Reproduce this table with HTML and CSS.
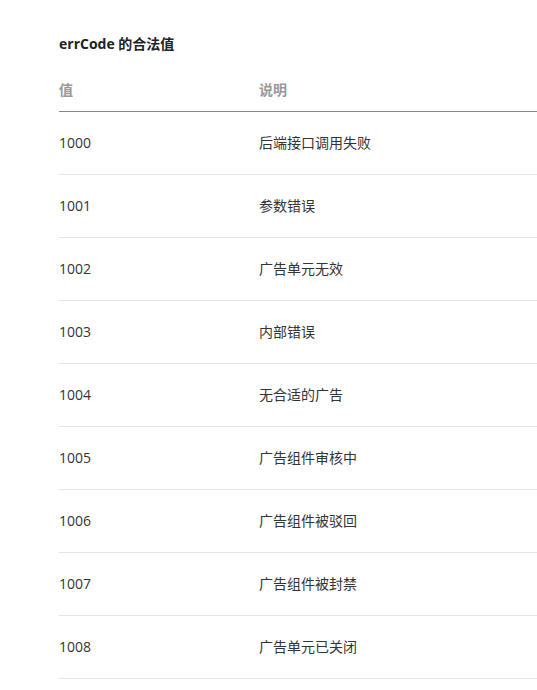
FILE: index.html
```html
<!DOCTYPE html>
<html lang="zh-CN">
<head>
<meta charset="utf-8">
<link rel="stylesheet" href="styles.css">
</head>
<body>
<div class="doc">
  <h4 class="title">errCode 的合法值</h4>
  <table class="codes">
    <thead>
      <tr><th class="c1">值</th><th>说明</th></tr>
    </thead>
    <tbody>
      <tr><td>1000</td><td>后端接口调用失败</td></tr>
      <tr><td>1001</td><td>参数错误</td></tr>
      <tr><td>1002</td><td>广告单元无效</td></tr>
      <tr><td>1003</td><td>内部错误</td></tr>
      <tr><td>1004</td><td>无合适的广告</td></tr>
      <tr><td>1005</td><td>广告组件审核中</td></tr>
      <tr><td>1006</td><td>广告组件被驳回</td></tr>
      <tr><td>1007</td><td>广告组件被封禁</td></tr>
      <tr><td>1008</td><td>广告单元已关闭</td></tr>
    </tbody>
  </table>
</div>
</body>
</html>
```
FILE: styles.css
```css
html, body {
  margin: 0;
  padding: 0;
  background: #fff;
  overflow: hidden;
}
body {
  font-family: "Open Sans", "Noto Sans CJK SC", sans-serif;
  color: #333;
  font-size: 14px;
}
.doc {
  padding: 34px 0 0 59px;
}
.title {
  margin: 0;
  font-size: 14px;
  font-weight: 700;
  line-height: 20px;
  color: #222;
}
.codes {
  width: 100%;
  border-collapse: collapse;
  margin-top: 26px;
}
.codes th {
  text-align: left;
  font-weight: 700;
  color: #999;
  font-size: 14px;
  line-height: 20px;
  padding: 0 0 11px 0;
  border-bottom: 1px solid #888;
}
.codes .c1, .codes td:first-child {
  width: 200px;
}
.codes td {
  padding: 21px 0;
  line-height: 20px;
  height: 20px;
  border-bottom: 1px solid #e5e5e5;
  color: #333;
}
```
